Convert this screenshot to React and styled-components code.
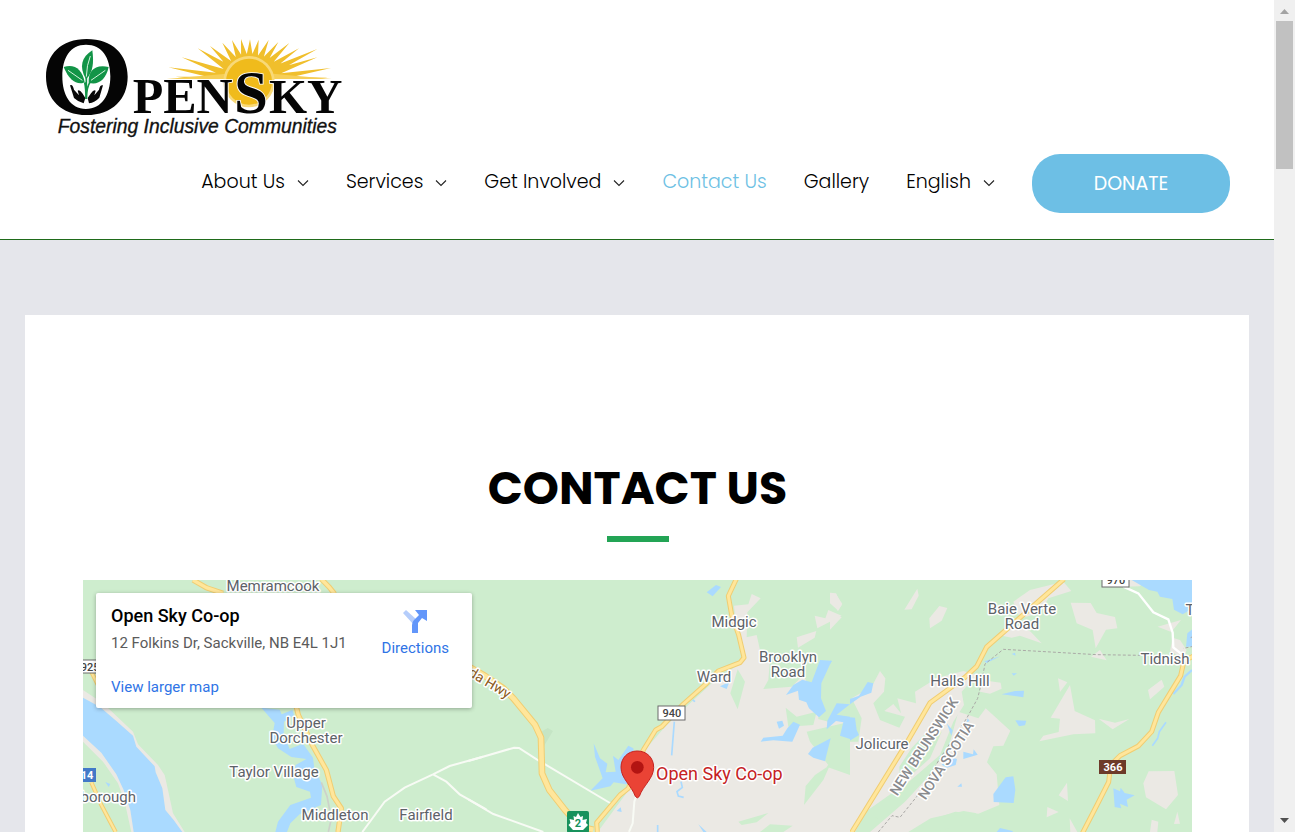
import React from "react";
import styled, { createGlobalStyle } from "styled-components";

const GlobalStyle = createGlobalStyle`
  *, *::before, *::after { box-sizing: border-box; }
  body {
    margin: 0;
    background: #fff;
    color: #000;
    font-family: Poppins, Inter, "Open Sans", sans-serif;
  }
`;

const Shell = styled.div`
  display: flex;
  height: 100vh;
  overflow: hidden;
`;

const Page = styled.div`
  flex: 1;
  min-width: 0;
  background: #e5e6eb;
`;

const Header = styled.header`
  display: flex;
  flex-direction: column;
  gap: 4px;
  padding: 25px 44px 26px 30px;
  background: #fff;
  border-bottom: 1px solid #1f6b1a;
`;

const LogoLink = styled.a`
  display: block;
  align-self: flex-start;
  height: 125px;
`;

const Nav = styled.nav`
  display: flex;
  align-items: center;
  justify-content: flex-end;
  gap: 37px;
`;

const NavLink = styled.a`
  display: inline-flex;
  align-items: center;
  gap: 12px;
  padding-bottom: 4px;
  color: ${(p) => (p.$active ? "#6ec1e4" : "#000")};
  font-size: 19px;
  font-weight: 300;
  line-height: 28px;
  text-decoration: none;
  white-space: nowrap;
`;

const DonateButton = styled.button`
  width: 198px;
  height: 59px;
  border: 0;
  border-radius: 28px;
  background: #6dbfe5;
  color: #fff;
  font: inherit;
  font-size: 19px;
  font-weight: 400;
  cursor: pointer;
`;

const Main = styled.main`
  padding: 75px 25px 0;
`;

const Panel = styled.section`
  display: flex;
  flex-direction: column;
  align-items: center;
  padding: 143px 57px 58px 58px;
  background: #fff;
`;

const Title = styled.h1`
  margin: 0;
  font-size: 46px;
  font-weight: 700;
  line-height: 60px;
  text-align: center;
`;

const TitleRule = styled.hr`
  width: 62px;
  height: 6px;
  margin: 18px 0 38px;
  border: 0;
  background: #23a455;
`;

const MapFrame = styled.div`
  position: relative;
  width: 100%;
  height: 450px;
  overflow: hidden;
  background: #ceedce;
  font-family: Roboto, sans-serif;
`;

const MapDrawing = styled.svg`
  display: block;
  width: 100%;
  height: 100%;
`;

const PlaceCard = styled.div`
  position: absolute;
  top: 13px;
  left: 13px;
  display: flex;
  justify-content: space-between;
  width: 376px;
  height: 115px;
  padding: 13px 23px 11px 15px;
  border-radius: 2px;
  background: #fff;
  box-shadow: 0 1px 4px rgba(0, 0, 0, 0.3);
`;

const PlaceInfo = styled.div`
  display: flex;
  flex-direction: column;
  align-items: flex-start;
`;

const PlaceName = styled.h2`
  margin: 0 0 7px;
  font-size: 18px;
  font-weight: 500;
  line-height: 20px;
`;

const PlaceAddress = styled.p`
  margin: 0 0 24px;
  color: #5b5b5b;
  font-size: 15px;
  line-height: 20px;
`;

const MapLink = styled.a`
  display: flex;
  flex-direction: column;
  align-items: center;
  gap: 5px;
  padding-top: ${(p) => (p.$icon ? "3px" : "0")};
  color: #2f74e6;
  font-size: 15px;
  line-height: 20px;
  text-decoration: none;
`;

const PlaceLabel = styled.text`
  fill: ${(p) => p.$color || "#5d6268"};
  stroke: #fff;
  stroke-width: 3px;
  stroke-linejoin: round;
  paint-order: stroke;
  font-size: ${(p) => p.$size || 15}px;
  font-weight: ${(p) => p.$weight || 400};
  text-anchor: ${(p) => p.$anchor || "middle"};
`;

const ShieldText = styled.text`
  fill: ${(p) => p.$color || "#444"};
  font-size: 11px;
  font-weight: ${(p) => (p.$color ? 700 : 500)};
  text-anchor: middle;
`;

const ScrollBar = styled.div`
  display: flex;
  flex-direction: column;
  align-items: center;
  justify-content: space-between;
  width: 21px;
  background: #f0f0f0;
`;

const ScrollTop = styled.div`
  display: flex;
  flex-direction: column;
  align-items: center;
  gap: 7px;
  padding-top: 9px;
`;

const ScrollThumb = styled.div`
  width: 17px;
  height: 148px;
  background: #c1c1c1;
`;

const Arrow = styled.svg`
  display: block;
  margin-bottom: ${(p) => (p.$down ? "9px" : "0")};
`;

const Chevron = () => (
  <svg width="12" height="12" viewBox="0 0 12 12" aria-hidden="true">
    <path d="M1 4.500L6 9.500L11 4.500" fill="none" stroke="#222" strokeWidth="1.1" />
  </svg>
);

/* Sun rays: tips listed left to right around the disc at (657,165) */
const rayTips = [
  [415, 127], [437, 155], [455, 97], [503, 70], [540, 63], [577, 53], [606, 45], [633, 42],
  [660, 43], [686, 44], [716, 45], [745, 51], [778, 54], [807, 70], [862, 72], [862, 97], [903, 129], [893, 158],
];

const ray = ([x, y]) => {
  const dx = x - 657;
  const dy = y - 170;
  const len = Math.hypot(dx, dy);
  const px = (-dy / len) * 11;
  const py = (dx / len) * 11;
  const bx = 657 + (dx / len) * 70;
  const by = 170 + (dy / len) * 70;
  return `M${x} ${y}L${bx + px} ${by + py}L${bx - px} ${by - py}Z`;
};

const Logo = () => (
  <svg width="330" height="125" viewBox="0 0 990 375" role="img" aria-label="OpenSky, Fostering Inclusive Communities">
    <clipPath id="horizon"><rect x="400" y="30" width="520" height="132" /></clipPath>
    <g clipPath="url(#horizon)">
      <path d={rayTips.map(ray).join("")} fill="#f0bf2c" />
      <path d="M410 162L590 146H728L905 162Z" fill="#f6cf58" />
    </g>
    <circle cx="657" cy="170" r="77" fill="#f8d978" />
    <circle cx="657" cy="170" r="69" fill="#f0bb1c" />
    <path fillRule="evenodd" fill="#050505" d="M170 42C247 42 293 88 293 155S247 270 170 270 48 222 48 155 94 42 170 42ZM168 59C121 59 97 98 97 154S121 252 168 252 241 211 241 154 216 59 168 59Z" />
    <g fill="#129447">
      <path d="M168 163C146 125 155 96 187 76C192 113 189 141 170 161Z" />
      <path d="M159 174C136 178 116 163 101 126C132 115 157 132 164 171Z" />
      <path d="M176 173C174 139 193 117 236 126C228 164 204 182 176 173Z" />
    </g>
    <g fill="none" stroke="#129447" strokeWidth="5">
      <path d="M169 158V215M164 172Q168 190 168 222M181 170Q170 184 169 222" />
      <path d="M181 93Q170 120 169 155M114 136L157 166M226 136L183 166" stroke="#d5f3dc" strokeWidth="3" />
    </g>
    <path fill="#080808" d="M120 181Q128 176 132 194L147 211L143 197Q148 192 157 205L166 219L161 235Q146 232 132 219ZM219 181Q210 178 207 194L193 211L197 197Q191 193 183 205L173 219L177 235Q195 232 208 218Z" />
    <g fontFamily="Liberation Serif, serif" fontWeight="700" fill="#050505" stroke="#fff" strokeWidth="5" paintOrder="stroke">
      <text x="308" y="265" fontSize="150">PEN</text>
      <text x="717" y="265" fontSize="147">KY</text>
      <text x="612" y="264" fontSize="183">S</text>
    </g>
    <text x="83" y="324" fontFamily="Liberation Sans, sans-serif" fontStyle="italic" fontSize="58" fill="#111" stroke="#111" strokeWidth="1">Fostering Inclusive Communities</text>
  </svg>
);

const Road = ({ d, width = 10 }) => (
  <g fill="none" strokeLinejoin="round">
    <path d={d} stroke="#f0cd72" strokeWidth={width + 6} />
    <path d={d} stroke="#ffe69b" strokeWidth={width} />
  </g>
);

const LAND = "#ebe9e4";
const WATER = "#aadaff";
const GREEN = "#ceedce";

const WestTile = () => (
  <g transform="translate(0 -5) scale(0.333333)">
    <path fill={LAND} d="M0 345L60 385L110 432L150 470L165 508L225 570L245 600L255 645L270 715L305 771H145L125 680L105 625L60 560L0 500Z" />
    <path fill={WATER} d="M0 368L50 395L100 438L150 482L160 515L215 574L218 592L238 640L247 705L272 735L298 771H152L142 705L122 645L100 598L55 533L0 482Z" />
    <path fill={WATER} d="M535 398L590 404L596 418L628 405L633 420L603 440L602 480L620 522L660 506L690 548L694 580L718 630L714 690L650 718L622 745L612 771H577L585 740L622 690L684 668L681 650L640 636L630 600L638 570L670 552L625 546L585 520L567 488L575 444Z" />
    <path fill={WATER} d="M67 621L82 627L77 636Z" />
    <path d="M715 622L732 664L745 730L736 771" fill="none" stroke="#cdd1ca" strokeWidth="5" />
    <path d="M838 771L905 680L965 638L1050 598L1100 573L1200 545M1050 598L1090 620L1130 658L1210 703" fill="none" stroke="#f8fbf5" strokeWidth="6" />
    <Road d="M330 15L370 38L420 55M715 12L740 38L755 57M640 396L646 420L688 510L730 585L751 664L775 700L765 771" />
    <Road d="M25 290L45 330M25 622L55 690L98 771" width={7} />
  </g>
);

const MidTile = () => (
  <g transform="translate(387 -5) scale(0.333333)">
    <path fill={LAND} d="M792 92L835 88L845 57L872 70L832 112L830 187L860 180L870 225L900 255L895 315L880 342L965 335L1000 300L1050 400L1080 430L1140 445V775H380L480 640L520 530L590 450L730 320L825 255L800 170Z" />
    <path fill={LAND} d="M1098 57L1117 87L1102 108ZM1034 122L1066 130L1075 105L1115 122L1042 160ZM980 187L1039 168L1034 188L984 218Z" />
    <path fill="#c5e5c5" d="M214 470L233 459L249 468L222 513Z" />
    <path fill={GREEN} d="M803 283L825 320L803 403L781 355ZM947 398L980 425L1040 410L1030 450L955 455ZM1010 470L1140 440V510L1075 570L1020 500ZM1035 600L1080 570L1060 615L1002 690L1007 633ZM1070 575L1100 540L1140 500V600ZM805 740L895 714L860 742L815 750ZM870 771L900 748L968 752L940 771Z" />
    <path fill={GREEN} d="M1050 335L1140 270V395L1075 440L1045 432Z" />
    <path fill={WATER} d="M710 52L738 30L753 36L728 64ZM750 334L778 321L770 342ZM1050 255L1085 257L1054 325L1053 370L1068 408L1047 427L1017 400L1009 382L987 374L984 347L948 360L970 330L997 314L1025 322ZM920 440L937 437L942 452L927 461ZM952 460L970 440L990 449L967 500L910 496L872 500L880 488L938 482ZM1072 437L1100 385L1140 388L1100 419L1140 425V492L1110 482L1120 442L1098 438L1070 463ZM1082 490L1070 538L1065 559L1030 548L1014 537L1028 518Z" />
    <path fill={WATER} d="M371 505L390 550L412 566L407 592L437 590L429 542L445 555L475 512L490 520L500 620L478 629L431 622L421 634L361 647L398 610L375 545ZM440 708L452 697L455 711ZM685 748L710 771H700Z" />
    <path fill="none" stroke={WATER} strokeWidth="5" d="M613 440L605 541M633 620L637 637L621 650L625 663L641 667M563 750V771M668 375L675 380" />
    <path fill="none" stroke="#f8fbf5" strokeWidth="6" d="M-5 558L132 518L147 519L200 553L425 687M-5 673L70 717L220 771M498 664L493 680L488 745L477 771" />
    <Road d="M0 277L45 303L100 340L130 370L195 449L213 488L216 595L238 645L285 705L330 755L370 764" width={14} />
    <Road d="M799 12L775 63L785 120L806 180L822 248L810 263L745 288L710 325L640 387L575 455L557 465L520 525L475 640L450 660L380 743L382 771" width={9} />
    <path fill="#ea4335" d="M502 528C531 528 551 549 551 577C551 611 520 630 508 664Q502 673 496 664C484 630 453 611 453 577C453 549 473 528 502 528Z" stroke="#c5221f" strokeWidth="3" />
    <circle cx="502" cy="577" r="19" fill="#b31412" />
  </g>
);

const EastTile = () => (
  <g transform="translate(747 -5) scale(0.333333)">
    <path fill={LAND} d="M0 500L85 500L95 430L65 370L125 335L150 288L166 310L162 350L130 385L150 435L208 458L225 425L163 408L190 387L213 415L202 370L258 385L255 350L320 310L400 288L440 300L395 350L402 390L370 440L330 540L235 622L178 660L110 708L75 771L0 745Z" />
    <path fill={LAND} d="M385 410L445 430L467 400L541 467L520 512L490 514L471 562L500 598L508 690L445 716L376 710L310 732L260 771H120L225 680L290 610L355 520Z" />
    <path fill={LAND} d="M262 41L266 62L245 103L223 104ZM328 93L352 99L335 137L300 160L298 130ZM0 53L18 55L35 90L25 107L0 85ZM0 110L35 127L0 164ZM550 80L600 45L700 20L724 48L655 70L630 115L570 130ZM722 83L782 84L800 114L855 126L862 160L828 164L797 220L788 165L740 145ZM505 180L565 150L602 170L635 205L570 182L545 188ZM455 315L512 323L515 341L480 356L450 350ZM684 310L712 322L690 351ZM720 330L734 408L795 436L796 475L730 478L628 499L640 482L686 471L690 431L662 428ZM806 431L855 443L898 432L848 463ZM995 314L1003 335L960 373L954 345ZM940 625L956 589L1033 588L1044 660L1008 703L948 667ZM711 623L714 678L686 661ZM652 696L686 711L650 727ZM719 730L742 771H721ZM1042 710L1050 746L1032 747ZM965 734L985 740L982 771H960ZM855 15H945L930 34L880 35ZM983 155L1053 135L1024 171ZM1028 188L1050 195L1070 225L1060 250L1020 228ZM1060 60L1086 92V115L1050 105ZM783 245L810 225L830 256Z" />
    <path fill={GREEN} d="M208 575L245 519L299 462L335 470L300 550L210 630ZM127 720L174 664L231 635L236 660L150 737ZM302 730L401 708L440 715L395 750L320 771H235Z" />
    <path fill={WATER} d="M0 395L20 386L87 362L113 321L130 325L124 353L92 365L28 410L0 445ZM0 485L37 453L45 425L75 428L80 465L87 480L62 496L45 495L39 476L0 497ZM527 607L550 604L556 644L551 684L491 681L490 657ZM850 640L870 649L872 638L884 654L914 661L890 674L894 696L870 686L874 700L854 696ZM556 436L589 437L585 451L567 454ZM555 348L582 347L580 367L560 364L515 358ZM463 259L511 244L470 264ZM545 295H561L551 302ZM350 445L368 466L364 482ZM400 530L429 538L431 523L443 539L400 552ZM358 545L381 552L377 570L351 578L335 569ZM413 430L419 438L409 443ZM382 635L394 625L396 635ZM545 237L555 233L557 242ZM500 771L510 759L548 768V771ZM0 257L6 258L0 267ZM905 15H1090V100L1058 118L1032 104L1027 72L990 65L982 50L957 45ZM1072 175L1090 160V215H1068Z" />
    <path fill="none" stroke={WATER} strokeWidth="7" d="M1086 285L1064 305L1055 330L1030 357" />
    <path fill="none" stroke={WATER} strokeWidth="5" d="M1008 442L988 470L983 490L967 512" />
    <path fill="none" stroke="#aaa9a6" strokeWidth="3" strokeDasharray="9 6" d="M145 771L186 722L210 727L260 665L330 550L410 430L443 370L455 320L465 267L520 223L610 228L800 239L935 241M1090 184L1078 190M1090 214L1060 220" />
    <path fill="none" stroke="#fff" strokeWidth="7" d="M880 35L925 55L970 112L1015 133L1028 173L1030 217L1058 240" />
    <Road d="M702 12L620 84L470 216L440 274L405 307L300 383L225 512L63 775" width={9} />
    <Road d="M1092 242L1062 258L1052 302L985 412L965 470L925 513L870 542L842 570L836 621L801 690L757 775" width={9} />
  </g>
);

const places = [
  ["Memramcook", 190, 11], ["Upper", 223, 148], ["Dorchester", 223, 163],
  ["Taylor Village", 191, 197], ["Middleton", 252, 240], ["Fairfield", 343, 240],
  ["Midgic", 651, 47], ["Ward", 631, 102], ["Brooklyn", 705, 82], ["Road", 705, 97],
  ["Baie Verte", 939, 34], ["Road", 939, 49], ["Halls Hill", 877, 106],
  ["Jolicure", 799, 169], ["Tidnish", 1082, 84], ["T", 1107, 35],
];

const Map = () => (
  <MapDrawing viewBox="0 0 1109 450" preserveAspectRatio="xMidYMin slice" role="img" aria-label="Map of Sackville and surroundings">
    <rect width="1109" height="450" fill={GREEN} />
    <EastTile />
    <MidTile />
    <WestTile />
    {places.map(([name, x, y]) => (
      <PlaceLabel key={`${name}${y}`} x={x} y={y}>{name}</PlaceLabel>
    ))}
    <PlaceLabel x="53" y="222" $anchor="end">borough</PlaceLabel>
    <PlaceLabel $color="#8a8b8e" $size={14} $weight={500} transform="translate(845 169) rotate(-57)">NEW BRUNSWICK</PlaceLabel>
    <PlaceLabel $color="#8a8b8e" $size={14} $weight={500} transform="translate(867 183) rotate(-57)">NOVA SCOTIA</PlaceLabel>
    <PlaceLabel $color="#8b5a1c" $size={14} transform="translate(401 105) rotate(31)">nda Hwy</PlaceLabel>
    <PlaceLabel x="573" y="200" $anchor="start" $size={18} $color="#c5221f">Open Sky Co-op</PlaceLabel>
    <g stroke="#6b6b6b" fill="#fff">
      <rect x="575" y="126" width="27" height="14" />
      <rect x="1019" y="-8" width="27" height="15" />
      <rect x="-9" y="80" width="27" height="13" />
    </g>
    <ShieldText x="589" y="137">940</ShieldText>
    <ShieldText x="1033" y="4">970</ShieldText>
    <ShieldText x="7" y="91">925</ShieldText>
    <rect x="-7" y="188" width="20" height="14" fill="#4279c8" />
    <ShieldText x="4" y="199" $color="#fff">14</ShieldText>
    <rect x="1016" y="180" width="27" height="14" fill="#6d3a29" />
    <ShieldText x="1030" y="191" $color="#fff">366</ShieldText>
    <rect x="484" y="231" width="22" height="22" rx="2" fill="#18925c" />
    <path fill="#fff" d="M495 233L497.500 237L500 236L499.500 240L504 239L503 243L505 245L500 250H490L485.500 245L487.500 243L486.500 239L491 240L490.500 236L493 237Z" />
    <ShieldText x="495" y="247" $color="#18925c">2</ShieldText>
  </MapDrawing>
);

const DirectionsIcon = () => (
  <svg width="24" height="24" viewBox="0 0 24 24" aria-hidden="true">
    <path d="M0 4L3 1L14 11L11 16Z" fill="#b5cdfb" />
    <path d="M9 24V16Q9 13 11 11L16 6L12 1H24V12L19 9L15 14V24Z" fill="#6296fa" />
  </svg>
);

const navItems = [
  { label: "About Us", menu: true },
  { label: "Services", menu: true },
  { label: "Get Involved", menu: true },
  { label: "Contact Us", active: true },
  { label: "Gallery" },
  { label: "English", menu: true },
];

export default function App() {
  return (
    <>
      <GlobalStyle />
      <Shell>
        <Page>
          <Header>
            <LogoLink href="#home"><Logo /></LogoLink>
            <Nav aria-label="Main">
              {navItems.map((item) => (
                <NavLink key={item.label} href="#" $active={item.active} aria-current={item.active ? "page" : undefined}>
                  {item.label}
                  {item.menu && <Chevron />}
                </NavLink>
              ))}
              <DonateButton type="button">DONATE</DonateButton>
            </Nav>
          </Header>
          <Main>
            <Panel>
              <Title>CONTACT US</Title>
              <TitleRule />
              <MapFrame>
                <Map />
                <PlaceCard>
                  <PlaceInfo>
                    <PlaceName>Open Sky Co-op</PlaceName>
                    <PlaceAddress>12 Folkins Dr, Sackville, NB E4L 1J1</PlaceAddress>
                    <MapLink href="#map">View larger map</MapLink>
                  </PlaceInfo>
                  <MapLink href="#directions" $icon>
                    <DirectionsIcon />
                    Directions
                  </MapLink>
                </PlaceCard>
              </MapFrame>
            </Panel>
          </Main>
        </Page>
        <ScrollBar aria-hidden="true">
          <ScrollTop>
            <Arrow width="9" height="5" viewBox="0 0 9 5"><path d="M0 5L4.500 0L9 5Z" fill="#a3a3a3" /></Arrow>
            <ScrollThumb />
          </ScrollTop>
          <Arrow $down width="9" height="5" viewBox="0 0 9 5"><path d="M0 0L4.500 5L9 0Z" fill="#505050" /></Arrow>
        </ScrollBar>
      </Shell>
    </>
  );
}
